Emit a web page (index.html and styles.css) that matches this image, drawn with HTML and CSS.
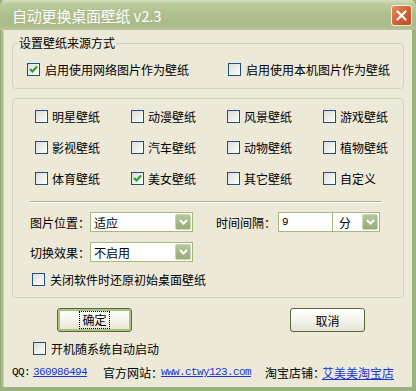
FILE: index.html
```html
<!DOCTYPE html>
<html lang="zh-CN">
<head>
  <meta charset="UTF-8" />
  <title>自动更换桌面壁纸 v2.3</title>
  <link rel="stylesheet" href="styles.css">
</head>
<body>
  <div class="window">
    <div class="titlebar">
      <span class="title">自动更换桌面壁纸 v2.3</span>
      <span class="close">
        <svg width="11" height="11" viewBox="0 0 11 11"><path d="M1.5 1.5 L9.5 9.5 M9.5 1.5 L1.5 9.5" stroke="#fff" stroke-width="2.2" stroke-linecap="round"/></svg>
      </span>
    </div>

    <div class="client">
      <!-- source group -->
      <div class="group group-source">
        <div class="legend">设置壁纸来源方式</div>
        <div class="source-row">
          <label class="check"><span class="box checked"><svg width="9" height="9" viewBox="0 0 9 9"><path d="M1 4 L3.5 6.5 L8 1.5" stroke="#21a121" stroke-width="2" fill="none"/></svg></span>启用使用网络图片作为壁纸</label>
          <label class="check"><span class="box"></span>启用使用本机图片作为壁纸</label>
        </div>
      </div>

      <!-- kinds + options group -->
      <div class="group group-kinds">
        <div class="kinds">
          <label class="check"><span class="box"></span>明星壁纸</label>
          <label class="check"><span class="box"></span>动漫壁纸</label>
          <label class="check"><span class="box"></span>风景壁纸</label>
          <label class="check"><span class="box"></span>游戏壁纸</label>
          <label class="check"><span class="box"></span>影视壁纸</label>
          <label class="check"><span class="box"></span>汽车壁纸</label>
          <label class="check"><span class="box"></span>动物壁纸</label>
          <label class="check"><span class="box"></span>植物壁纸</label>
          <label class="check"><span class="box"></span>体育壁纸</label>
          <label class="check"><span class="box checked"><svg width="9" height="9" viewBox="0 0 9 9"><path d="M1 4 L3.5 6.5 L8 1.5" stroke="#21a121" stroke-width="2" fill="none"/></svg></span>美女壁纸</label>
          <label class="check"><span class="box"></span>其它壁纸</label>
          <label class="check"><span class="box"></span>自定义</label>
        </div>

        <div class="sep"></div>

        <div class="field-row">
          <span class="field-label">图片位置：</span>
          <div class="combo combo-wide"><span class="combo-text">适应</span><span class="arrow"><svg width="9" height="6" viewBox="0 0 9 6"><path d="M1 1 L4.5 4.5 L8 1" stroke="#fff" stroke-width="2" fill="none"/></svg></span></div>
          <span class="field-label label-gap">时间间隔：</span>
          <div class="edit">9</div>
          <div class="combo combo-unit"><span class="combo-text">分</span><span class="arrow"><svg width="9" height="6" viewBox="0 0 9 6"><path d="M1 1 L4.5 4.5 L8 1" stroke="#fff" stroke-width="2" fill="none"/></svg></span></div>
        </div>

        <div class="field-row row-second">
          <span class="field-label">切换效果：</span>
          <div class="combo combo-wide"><span class="combo-text">不启用</span><span class="arrow"><svg width="9" height="6" viewBox="0 0 9 6"><path d="M1 1 L4.5 4.5 L8 1" stroke="#fff" stroke-width="2" fill="none"/></svg></span></div>
        </div>

        <label class="check restore"><span class="box"></span>关闭软件时还原初始桌面壁纸</label>
      </div>

      <div class="buttons">
        <button class="btn btn-default"><span class="focus">确定</span></button>
        <button class="btn">取消</button>
      </div>

      <label class="check autostart"><span class="box"></span>开机随系统自动启动</label>

      <div class="footer">
        <span class="mono qq">QQ:</span>
        <a class="mono link-qq" href="#">360986494</a>
        <span class="foot-label site">官方网站：</span>
        <a class="mono" href="#">www.ctwy123.com</a>
        <span class="foot-label shop">淘宝店铺：</span>
        <a href="#">艾美美淘宝店</a>
      </div>
    </div>
  </div>
</body>
</html>
```

FILE: styles.css
```css
* {
  box-sizing: border-box;
}

body {
  margin: 0;
  font-family: "Noto Sans CJK SC", "Liberation Sans", sans-serif;
  font-size: 12px;
  color: #000;
  background: #ece9d8;
}

.window {
  width: 416px;
  height: 391px;
  background: linear-gradient(to right, #7e9764 0, #a9bd8b 1px, #a9bd8b 3px, #ece9d8 4px);
  border-right: 4px solid #9cb27e;
  border-bottom: 4px solid #9cb27e;
  display: flex;
  flex-direction: column;
}

.titlebar {
  height: 30px;
  margin-right: -4px;
  display: flex;
  align-items: center;
  justify-content: space-between;
  padding: 0 4px 0 12px;
  background: linear-gradient(to bottom, #d7e0bf 0, #bccb9d 4px, #afc08e 14px, #aabb88 24px, #b4c494 30px);
  border-radius: 6px 6px 0 0;
}

.title {
  font-size: 15px;
  color: #fff;
  text-shadow: 0 0 1px #a3b482;
  letter-spacing: -0.2px;
}

.close {
  width: 21px;
  height: 21px;
  border: 1px solid #f4f0e8;
  border-radius: 3px;
  background: linear-gradient(to bottom right, #e88a63, #cf5a30 60%, #c14a24);
  display: flex;
  align-items: center;
  justify-content: center;
}

.client {
  flex: 1;
  margin-left: 4px;
  background: #ece9d8;
  display: flex;
  flex-direction: column;
}

.group {
  margin: 0 8px;
  border: 1px solid #d0d0bf;
  border-radius: 4px;
}

.group-source {
  margin-top: 13px;
  height: 46px;
}

.legend {
  width: max-content;
  margin: -8px 0 0 5px;
  padding: 0 1px;
  height: 14px;
  line-height: 14px;
  background: #ece9d8;
}

.source-row {
  margin: 13px 0 0 14px;
  display: grid;
  grid-template-columns: 201px auto;
}

.check {
  display: flex;
  align-items: center;
  gap: 4px;
  height: 13px;
  line-height: 13px;
  white-space: nowrap;
}

.source-row .check {
  gap: 5px;
}

.box {
  flex: none;
  width: 13px;
  height: 13px;
  border: 1px solid #1c5180;
  background: linear-gradient(to bottom right, #dcdcd7, #fff);
  display: flex;
  align-items: center;
  justify-content: center;
}

.group-kinds {
  margin-top: 9px;
  height: 200px;
  padding-top: 11px;
}

.kinds {
  margin-left: 22px;
  display: grid;
  grid-template-columns: repeat(4, 96px);
  row-gap: 18px;
}

.sep {
  margin: 16px 0 0 17px;
  width: 351px;
  height: 2px;
  border-top: 1px solid #aca899;
  border-bottom: 1px solid #fff;
}

.field-row {
  margin: 9px 0 0 17px;
  height: 20px;
  display: flex;
  align-items: center;
}

.row-second {
  margin-top: 10px;
}

.field-label {
  width: 60px;
}

.label-gap {
  margin-left: 23px;
  width: 62px;
}

.combo,
.edit {
  height: 20px;
  border: 1px solid #a5b97f;
  background: #fff;
  display: flex;
  align-items: center;
}

.combo {
  justify-content: space-between;
  padding: 0 1px 0 3px;
}

.combo-wide {
  width: 103px;
}

.combo-unit {
  width: 47px;
  border-left: none;
  padding-left: 6px;
}

.edit {
  width: 55px;
  padding-left: 3px;
  font-family: "Liberation Mono", monospace;
  font-size: 11px;
}

.arrow {
  width: 16px;
  height: 16px;
  border: 1px solid #c9d3b4;
  border-radius: 2px;
  background: linear-gradient(to bottom, #b9c79d, #a3b485 60%, #9aac7d);
  display: flex;
  align-items: center;
  justify-content: center;
}

.restore {
  margin: 11px 0 0 19px;
  gap: 5px;
}

.buttons {
  margin: 10px 0 0 53px;
  display: flex;
  gap: 158px;
}

.btn {
  width: 75px;
  height: 24px;
  padding: 0;
  font-family: inherit;
  font-size: 12px;
  color: #000;
  border: 1px solid #5b6a3e;
  border-radius: 3px;
  background: linear-gradient(to bottom, #ffffff, #f6f5ee 50%, #e3e2d4);
  display: flex;
  align-items: center;
  justify-content: center;
}

.btn-default {
  box-shadow: inset 0 0 0 2px #a9c47c;
}

.focus {
  padding: 1px 2px;
  line-height: 14px;
  border: 1px dotted #000;
}

.autostart {
  margin: 10px 0 0 29px;
  gap: 5px;
}

.footer {
  margin: 10px 0 0 8px;
  height: 14px;
  display: flex;
  align-items: center;
  white-space: nowrap;
}

.mono {
  font-family: "Liberation Mono", monospace;
  font-size: 11px;
  letter-spacing: -0.6px;
}

.qq {
  width: 21px;
}

a {
  color: #1a35d8;
  text-decoration: underline;
}

.link-qq {
  width: 54px;
}

.foot-label {
  overflow: visible;
}

.site {
  margin-left: 16px;
  width: 58px;
}

.shop {
  margin-left: 14px;
  width: 57px;
}
```
